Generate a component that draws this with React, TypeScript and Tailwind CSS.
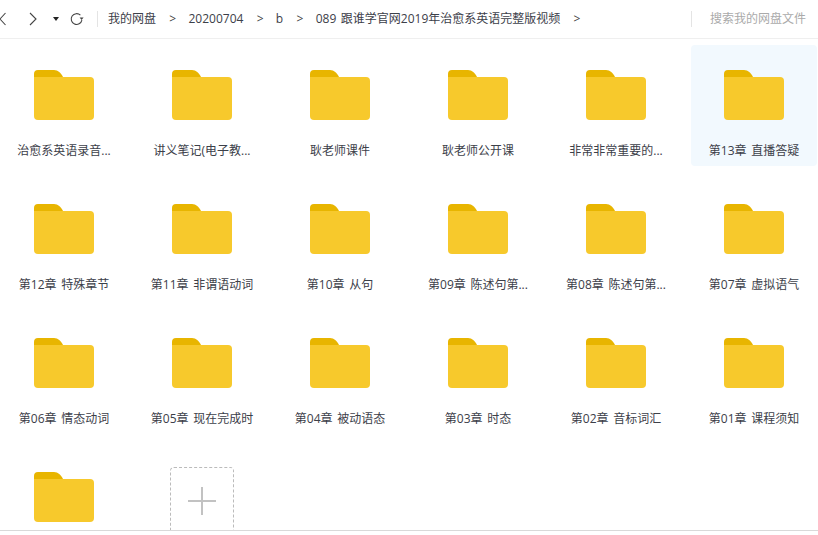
const row1 = ['治愈系英语录音...', '讲义笔记(电子教...', '耿老师课件', '耿老师公开课', '非常非常重要的...', '第13章 直播答疑'];
const row2 = ['第12章 特殊章节', '第11章 非谓语动词', '第10章 从句', '第09章 陈述句第...', '第08章 陈述句第...', '第07章 虚拟语气'];
const row3 = ['第06章 情态动词', '第05章 现在完成时', '第04章 被动语态', '第03章 时态', '第02章 音标词汇', '第01章 课程须知'];
const names = [...row1, ...row2, ...row3];
const crumbs = ['我的网盘', '20200704', 'b', '089 跟谁学官网2019年治愈系英语完整版视频'];

function FolderIcon() {
  return (
    <svg width="60" height="50" viewBox="0 0 60 50" className="block">
      <path d="M0 7V4a4 4 0 0 1 4-4h16c4 0 7 3 9 7z" fill="#e8b500" />
      <path d="M0 7h56a4 4 0 0 1 4 4v35a4 4 0 0 1-4 4H4a4 4 0 0 1-4-4z" fill="#f7c92c" />
    </svg>
  );
}

function FolderCell({ name, active }: { name: string; active: boolean }) {
  return (
    <div className={`flex h-[121px] w-[126px] flex-col items-center rounded-sm pt-[25px] ${active ? 'bg-[#f2f9fe]' : ''}`}>
      <FolderIcon />
      <div className="mt-[22px] h-[18px] whitespace-nowrap text-xs leading-[18px] text-[#3c4049] [word-spacing:1.5px]">{name}</div>
    </div>
  );
}

export default function App() {
  return (
    <div className="flex h-[535px] w-[818px] flex-col overflow-hidden bg-white font-['Open_Sans','Noto_Sans_CJK_SC',sans-serif]">
      <header className="flex h-[39px] shrink-0 items-center border-b border-[#efefef] pb-px">
        <svg width="6" height="14" viewBox="0 0 6 14" className="shrink-0" fill="none" stroke="#444" strokeWidth="1.1">
          <path d="M5.5 1 0 7l5.5 6" />
        </svg>
        <svg width="8" height="14" viewBox="0 0 8 14" className="ml-[23px] shrink-0" fill="none" stroke="#444" strokeWidth="1.1">
          <path d="m1 1 6 6-6 6" />
        </svg>
        <svg width="6" height="4" viewBox="0 0 6 4" className="ml-[16px] shrink-0" fill="#222">
          <path d="M0 0h6L3 4z" />
        </svg>
        <svg width="14" height="14" viewBox="0 0 14 14" className="ml-[11px] shrink-0" fill="none" stroke="#444" strokeWidth="1.1">
          <path d="M10.4 3.2A5.4 5.4 0 1 0 11.9 8.2" />
          <path d="M9.6 5.6h4l-2 2.4z" fill="#444" stroke="none" />
        </svg>
        <div className="ml-[13px] h-4 w-px bg-[#e4e4e4]" />
        <nav className="ml-[10px] flex items-center text-xs text-[#3c4049] [word-spacing:1.5px]">
          {crumbs.map((c) => (
            <div key={c} className="flex items-center">
              <span>{c}</span>
              <span className="ml-[13.3px] mr-[12.3px] text-[#444]">&gt;</span>
            </div>
          ))}
        </nav>
        <div className="ml-auto h-4 w-px bg-[#e4e4e4]" />
        <div className="ml-[18px] mr-[12px] text-xs text-[#aaaaaa]">搜索我的网盘文件</div>
      </header>

      <main className="min-h-0 flex-1 overflow-hidden pl-px pt-[6px]">
        <div className="grid grid-cols-[repeat(6,126px)] gap-x-3 gap-y-[13px]">
          {names.map((n, i) => (
            <FolderCell key={n} name={n} active={i === 5} />
          ))}
          <FolderCell name="" active={false} />
          <div className="flex h-[121px] w-[126px] justify-center pt-[20px]">
            <div className="flex h-[101px] w-16 shrink-0 justify-center rounded-sm border border-dashed border-[#bbbbbb] pt-[19px]">
              <svg width="28" height="28" viewBox="0 0 28 28" className="shrink-0" fill="#c2c2c2">
                <path d="M13 0h2v28h-2z" />
                <path d="M0 13h28v2H0z" />
              </svg>
            </div>
          </div>
        </div>
      </main>

      <footer className="h-[5px] shrink-0 border-t border-[#d9d9d9] bg-white" />
    </div>
  );
}
